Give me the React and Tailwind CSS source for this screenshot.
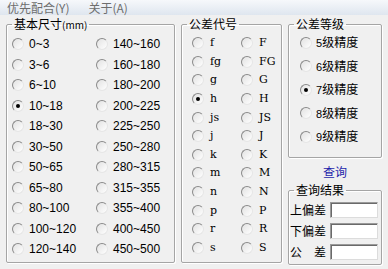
import React from "react";

const CJK = '"Noto Sans CJK SC", "Liberation Sans", sans-serif';

const sizes = [
  ["0～3", "140～160"],
  ["3～6", "160～180"],
  ["6～10", "180～200"],
  ["10～18", "200～225"],
  ["18～30", "225～250"],
  ["30～50", "250～280"],
  ["50～65", "280～315"],
  ["65～80", "315～355"],
  ["80～100", "355～400"],
  ["100～120", "400～450"],
  ["120～140", "450～500"],
];

const codes = [
  ["f", "F"],
  ["fg", "FG"],
  ["g", "G"],
  ["h", "H"],
  ["js", "JS"],
  ["j", "J"],
  ["k", "K"],
  ["m", "M"],
  ["n", "N"],
  ["p", "P"],
  ["r", "R"],
  ["s", "S"],
];

const grades = ["5", "6", "7", "8", "9"];

function Radio({ checked }) {
  return (
    <span className="flex h-[12px] w-[12px] shrink-0 items-center justify-center rounded-full border border-t-[#8a8a8a] border-l-[#8a8a8a] border-r-[#e6e6e6] border-b-[#e6e6e6] bg-gradient-to-br from-[#e2e2e2] to-white">
      {checked && <span className="h-[4px] w-[4px] rounded-full bg-black" />}
    </span>
  );
}

function Group({ title, className, children }) {
  return (
    <fieldset
      className={`rounded-[2px] border border-[#a5a5a5] shadow-[inset_1px_1px_0_#fff,1px_1px_0_#fff] ${className}`}
    >
      <legend className="ml-[5px] px-[2px] text-[12px] leading-[14px] text-black">{title}</legend>
      {children}
    </fieldset>
  );
}

function Field({ label }) {
  return (
    <div className="flex h-[16px] items-center">
      <span className="w-[40px] text-[12px] leading-[14px] text-black">{label}</span>
      <span className="h-[16px] w-[48px] border border-t-[#9a9a9a] border-l-[#9a9a9a] border-r-[#dcdcdc] border-b-[#dcdcdc] bg-white shadow-[inset_1px_1px_0_#6a6a6a]" />
    </div>
  );
}

export default function App() {
  return (
    <div className="h-[269px] w-[388px] overflow-hidden bg-[#f0f0f0]" style={{ fontFamily: CJK }}>
      <div className="flex h-[15px] items-center gap-[19px] bg-gradient-to-b from-[#f6f8fb] to-[#dfe6ef] pl-[7px] text-[12px] leading-[14px] text-[#6e6e6e]">
        <span>优先配合(Y)</span>
        <span>关于(A)</span>
      </div>

      <div className="mt-[2px] flex gap-[6px] pl-[6px]">
        <Group title={<>基本尺寸<span className="text-[10px]">(mm)</span></>} className="h-[246px] w-[169px]">
          <div className="grid grid-cols-[84px_1fr] pl-[5px] pt-[2px]">
            {sizes.map(([a, b]) => (
              <React.Fragment key={a}>
                {[a, b].map((t) => (
                  <div key={t} className="flex h-[20.5px] items-center gap-[5px]">
                    <Radio checked={t === "10～18"} />
                    <span className="text-[12px] leading-[14px] text-black" style={{ fontFamily: '"Liberation Sans", sans-serif' }}>
                      {t.replace("～", "~")}
                    </span>
                  </div>
                ))}
              </React.Fragment>
            ))}
          </div>
        </Group>

        <Group title="公差代号" className="h-[246px] w-[101px]">
          <div className="grid grid-cols-[49px_1fr] pl-[10px] pt-[3px]">
            {codes.map(([a, b]) => (
              <React.Fragment key={a}>
                {[a, b].map((t) => (
                  <div key={t} className="flex h-[18.6px] items-center gap-[6px]">
                    <Radio checked={t === "h"} />
                    <span className="text-[11px] leading-[14px] text-black" style={{ fontFamily: '"DejaVu Serif", serif' }}>
                      {t}
                    </span>
                  </div>
                ))}
              </React.Fragment>
            ))}
          </div>
        </Group>

        <div className="flex w-[94px] flex-col">
          <Group title="公差等级" className="h-[141px] w-[94px]">
            <div className="flex flex-col pl-[11px]">
              {grades.map((g) => (
                <div key={g} className="flex h-[23.5px] items-center gap-[4px]">
                  <Radio checked={g === "7"} />
                  <span className="text-[12px] leading-[14px] text-black">
                    <span className="text-[11px]" style={{ fontFamily: '"Liberation Sans", sans-serif' }}>{g}</span>级精度
                  </span>
                </div>
              ))}
            </div>
          </Group>

          <div className="h-[25px] pt-[7px] text-center text-[12px] leading-[14px] text-[#1e1eaa]">查询</div>

          <Group title="查询结果" className="h-[82px] w-[94px]">
            <div className="flex flex-col gap-[5px] pl-[1px] pt-[5px]">
              <Field label="上偏差" />
              <Field label="下偏差" />
              <Field label={<>公<span className="inline-block w-[12px]" />差</>} />
            </div>
          </Group>
        </div>
      </div>
    </div>
  );
}
